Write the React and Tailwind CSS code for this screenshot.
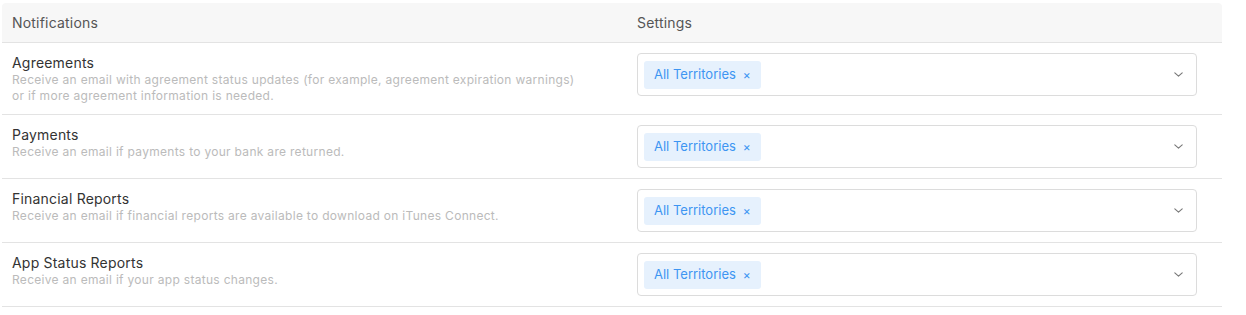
import React from "react";

const rows = [
  {
    title: "Agreements",
    desc: [
      "Receive an email with agreement status updates (for example, agreement expiration warnings)",
      "or if more agreement information is needed.",
    ],
  },
  {
    title: "Payments",
    desc: ["Receive an email if payments to your bank are returned."],
  },
  {
    title: "Financial Reports",
    desc: [
      "Receive an email if financial reports are available to download on iTunes Connect.",
    ],
  },
  {
    title: "App Status Reports",
    desc: ["Receive an email if your app status changes."],
  },
];

const TerritorySelect = () => (
  <div className="flex h-[43px] items-center justify-between rounded-[4px] border border-[#dcdcdc] bg-white pl-[6px] pr-[13px]">
    <span className="flex h-[28px] items-center gap-[7px] rounded-[3px] bg-[#e6f1fd] pl-[10px] pr-[10px] text-[13px] text-[#3d95f2]">
      All Territories
      <span className="text-[12px] leading-none">×</span>
    </span>
    <svg width="9" height="5" viewBox="0 0 9 5" fill="none">
      <polyline
        points="0.8,0.8 4.5,4.2 8.2,0.8"
        stroke="#777"
        strokeWidth="1.1"
        strokeLinecap="round"
        strokeLinejoin="round"
      />
    </svg>
  </div>
);

const App = () => {
  return (
    <div
      className="min-h-screen bg-white pl-[2px] pt-[3px]"
      style={{ fontFamily: "Inter, 'Noto Sans', sans-serif" }}
    >
      <div className="w-[1220px]">
        {/* Header */}
        <div className="flex h-[40px] items-center rounded-t-[4px] border-b border-[#e3e3e3] bg-[#f7f7f7] text-[14px] tracking-[0.2px] text-[#555]">
          <div className="w-[625px] pl-[10px]">Notifications</div>
          <div className="flex-1 pl-[10px]">Settings</div>
        </div>

        {rows.map((row) => (
          <div
            key={row.title}
            className="flex border-b border-[#e3e3e3] py-[10px]"
          >
            <div className="w-[625px] pl-[10px]">
              <div className="text-[14px] leading-[19px] tracking-[0.2px] text-[#333]">
                {row.title}
              </div>
              {row.desc.map((line) => (
                <div
                  key={line}
                  className="text-[12px] leading-[16px] tracking-[0.3px] text-[#bbb]"
                >
                  {line}
                </div>
              ))}
            </div>
            <div className="flex-1 pl-[10px] pr-[25px]">
              <TerritorySelect />
            </div>
          </div>
        ))}
      </div>
    </div>
  );
};

export default App;
